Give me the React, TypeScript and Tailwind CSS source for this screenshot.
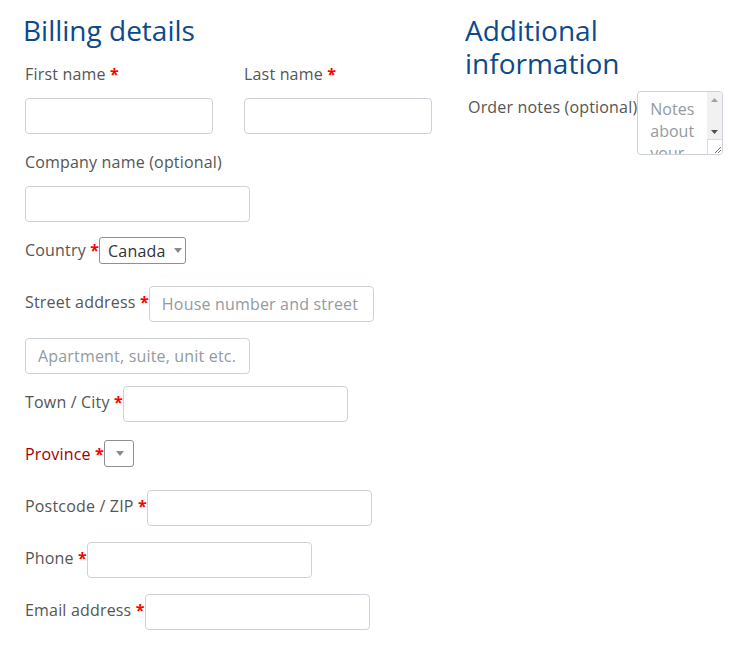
import React from "react";

const Star = () => (
  <span className="font-bold text-[#ff0000] no-underline"> *</span>
);

const inputCls =
  "h-9 border border-[#cdd2d8] rounded-[4px] bg-white px-3 text-[16px] text-[#333] placeholder:text-[#939aa1] outline-none";

const Caret = () => (
  <svg width="8" height="5" viewBox="0 0 8 5" className="shrink-0">
    <path d="M0 0 L8 0 L4 5 Z" fill="#8a8a8a" />
  </svg>
);

function InlineRow({
  label,
  labelCls = "text-[#555]",
  children,
  mb = "mb-4",
}: {
  label: string;
  labelCls?: string;
  children: React.ReactNode;
  mb?: string;
}) {
  return (
    <div className={`flex items-start h-9 ${mb}`}>
      <label className={`mt-1 leading-6 text-[16px] whitespace-nowrap ${labelCls}`}>
        {label}
        <Star />
      </label>
      <div>{children}</div>
    </div>
  );
}

export default function App() {
  return (
    <div className="flex bg-white min-h-[650px] font-['Open_Sans',sans-serif] text-[16px] tracking-[0.18px] text-[#555]">
      {/* Left column */}
      <div className="w-[407px] ml-[25px] shrink-0">
        <h3 className="-ml-[2px] mt-[14px] text-[28px] tracking-normal leading-[33px] text-[#0c4a8a] font-normal">
          Billing details
        </h3>
        <div className="flex gap-[31px] mt-[15px]">
          <div className="w-[188px]">
            <label className="block leading-6">
              First name
              <Star />
            </label>
            <input className={`${inputCls} w-full mt-3 block`} />
          </div>
          <div className="w-[188px]">
            <label className="block leading-6">
              Last name
              <Star />
            </label>
            <input className={`${inputCls} w-full mt-3 block`} />
          </div>
        </div>
        <label className="block leading-6 mt-4">Company name (optional)</label>
        <input className={`${inputCls} w-[225px] mt-3 block`} />

        <div className="mt-3">
          <InlineRow label="Country">
            <div className="mt-[3px] h-[27px] w-[87px] border border-[#8f8f8f] rounded-[3px] flex items-center pl-2 pr-[7px] gap-[8px] text-[#333] leading-6">
              <span>Canada</span>
              <Caret />
            </div>
          </InlineRow>
          <InlineRow label="Street address">
            <input className={`${inputCls} w-[225px]`} placeholder="House number and street" />
          </InlineRow>
          <div className="h-9 mb-3">
            <input className={`${inputCls} w-[225px]`} placeholder="Apartment, suite, unit etc." />
          </div>
          <InlineRow label="Town / City">
            <input className={`${inputCls} w-[225px]`} />
          </InlineRow>
          <InlineRow label="Province" labelCls="text-[#a00000]">
            <div className="mt-[2px] h-[27px] w-[30px] border border-[#8f8f8f] rounded-[3px] flex items-center justify-center pl-[3px]">
              <Caret />
            </div>
          </InlineRow>
          <InlineRow label="Postcode / ZIP">
            <input className={`${inputCls} w-[225px]`} />
          </InlineRow>
          <InlineRow label="Phone">
            <input className={`${inputCls} w-[225px]`} />
          </InlineRow>
          <InlineRow label="Email address">
            <input className={`${inputCls} w-[225px]`} />
          </InlineRow>
        </div>
      </div>

      {/* Right column */}
      <div className="w-[258px] ml-[33px] shrink-0">
        <h3 className="mt-[14px] text-[28px] tracking-normal leading-[33px] text-[#0c4a8a] font-normal">
          Additional information
        </h3>
        <div className="flex items-start mt-[11px]">
          <label className="mt-1 ml-[3px] leading-6 whitespace-nowrap">Order notes (optional)</label>
          <div className="w-[86px] h-[64px] shrink-0 border border-[#cdd2d8] rounded-[4px] bg-white flex overflow-hidden">
            <textarea
              className="flex-1 min-w-0 h-full resize-none pl-3 pr-0 pt-[6px] leading-[22px] overflow-hidden placeholder:text-[#939aa1] outline-none tracking-normal"
              placeholder="Notes about your order, e.g. special notes for delivery."
            />
            <div className="w-[15px] shrink-0 flex flex-col">
              <div className="flex-1 bg-[#f1f1f1] flex flex-col justify-between">
                <div className="h-[15px] flex items-center justify-center">
                  <svg width="7" height="4" viewBox="0 0 7 4">
                    <path d="M0 4 L7 4 L3.5 0 Z" fill="#a3a3a3" />
                  </svg>
                </div>
                <div className="h-[15px] flex items-center justify-center">
                  <svg width="7" height="4" viewBox="0 0 7 4">
                    <path d="M0 0 L7 0 L3.5 4 Z" fill="#505050" />
                  </svg>
                </div>
              </div>
              <div className="h-[15px] bg-white border-l border-t border-[#dcdcdc] flex items-end justify-end">
                <svg width="10" height="10" viewBox="0 0 10 10">
                  <path d="M9 3 L3 9 M9 6 L6 9" stroke="#6a6a6a" strokeWidth="1" />
                </svg>
              </div>
            </div>
          </div>
        </div>
      </div>
    </div>
  );
}
